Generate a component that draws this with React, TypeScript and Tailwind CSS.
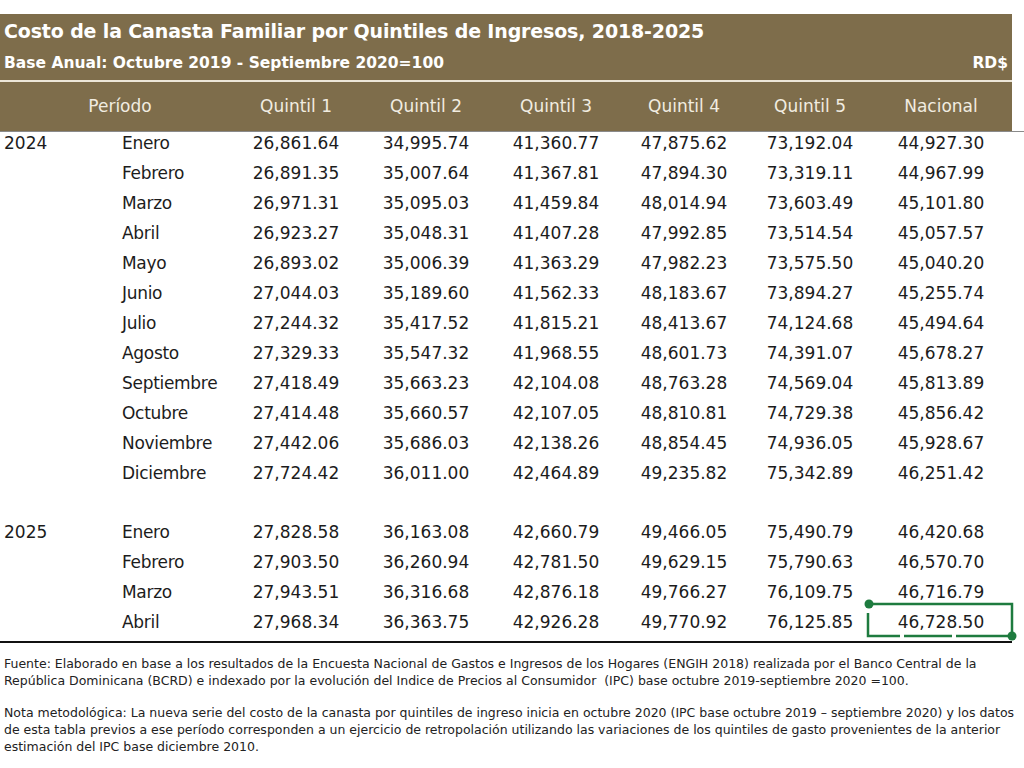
const rows2024 = [
  ["Enero", "26,861.64", "34,995.74", "41,360.77", "47,875.62", "73,192.04", "44,927.30"],
  ["Febrero", "26,891.35", "35,007.64", "41,367.81", "47,894.30", "73,319.11", "44,967.99"],
  ["Marzo", "26,971.31", "35,095.03", "41,459.84", "48,014.94", "73,603.49", "45,101.80"],
  ["Abril", "26,923.27", "35,048.31", "41,407.28", "47,992.85", "73,514.54", "45,057.57"],
  ["Mayo", "26,893.02", "35,006.39", "41,363.29", "47,982.23", "73,575.50", "45,040.20"],
  ["Junio", "27,044.03", "35,189.60", "41,562.33", "48,183.67", "73,894.27", "45,255.74"],
  ["Julio", "27,244.32", "35,417.52", "41,815.21", "48,413.67", "74,124.68", "45,494.64"],
  ["Agosto", "27,329.33", "35,547.32", "41,968.55", "48,601.73", "74,391.07", "45,678.27"],
  ["Septiembre", "27,418.49", "35,663.23", "42,104.08", "48,763.28", "74,569.04", "45,813.89"],
  ["Octubre", "27,414.48", "35,660.57", "42,107.05", "48,810.81", "74,729.38", "45,856.42"],
  ["Noviembre", "27,442.06", "35,686.03", "42,138.26", "48,854.45", "74,936.05", "45,928.67"],
  ["Diciembre", "27,724.42", "36,011.00", "42,464.89", "49,235.82", "75,342.89", "46,251.42"],
];

const rows2025 = [
  ["Enero", "27,828.58", "36,163.08", "42,660.79", "49,466.05", "75,490.79", "46,420.68"],
  ["Febrero", "27,903.50", "36,260.94", "42,781.50", "49,629.15", "75,790.63", "46,570.70"],
  ["Marzo", "27,943.51", "36,316.68", "42,876.18", "49,766.27", "76,109.75", "46,716.79"],
  ["Abril", "27,968.34", "36,363.75", "42,926.28", "49,770.92", "76,125.85", "46,728.50"],
];

// column widths: year, month, Q1..Q5, Nacional
const cols = "grid grid-cols-[118px_114px_128px_132px_128px_128px_124px_138px]";

function YearBlock({ year, rows }: { year: string; rows: string[][] }) {
  return (
    <div>
      {rows.map((r, i) => (
        <div key={r[0]} className={`${cols} h-[30px] leading-[23px] text-[17px] text-[#1c1c1c]`}>
          <div className="pl-1">{i === 0 ? year : ""}</div>
          <div className="pl-1 tracking-[-0.3px]">{r[0]}</div>
          {r.slice(1).map((v, j) => (
            <div key={j} className="text-center">
              {v}
            </div>
          ))}
        </div>
      ))}
    </div>
  );
}

export default function App() {
  return (
    <div className="relative w-[1024px] h-[768px] bg-white overflow-hidden" style={{ fontFamily: '"DejaVu Sans", Verdana, sans-serif' }}>
      {/* Header band */}
      <div className="mt-[14px] w-[1012px] bg-[#7e6d4b]">
        <div className="h-[36px] px-1 pt-[3px] text-[19px] tracking-[-0.15px] font-bold text-white leading-[28px]">
          Costo de la Canasta Familiar por Quintiles de Ingresos, 2018-2025
        </div>
        <div className="flex justify-between h-[30px] px-1 text-[15.5px] font-bold text-white leading-[26px]">
          <span>Base Anual: Octubre 2019 - Septiembre 2020=100</span>
          <span>RD$</span>
        </div>
        <div className="h-[2px] bg-[#ece6d8]" />
        <div className={`${cols} h-[49px] items-center text-[17px] text-[#f1ece0]`}>
          <div className="col-span-2 text-center pl-2">Período</div>
          <div className="text-center">Quintil 1</div>
          <div className="text-center">Quintil 2</div>
          <div className="text-center">Quintil 3</div>
          <div className="text-center">Quintil 4</div>
          <div className="text-center">Quintil 5</div>
          <div className="text-center">Nacional</div>
        </div>
      </div>
      <div className="h-px w-full bg-[#8a8a8a]" />

      {/* Data */}
      <div className="w-[1012px]">
        <YearBlock year="2024" rows={rows2024} />
        <div className="h-[29px]" />
        <YearBlock year="2025" rows={rows2025} />
      </div>
      <div className="h-[2px] w-[1012px] bg-[#111]" />

      {/* Notes */}
      <div className="px-1 pt-[12px] text-[12.5px] leading-[17px] text-[#222]">
        <p>
          Fuente: Elaborado en base a los resultados de la Encuesta Nacional de Gastos e Ingresos de los Hogares (ENGIH 2018) realizada por el Banco Central de la República Dominicana (BCRD) e indexado por la evolución del Indice de Precios al Consumidor&nbsp; (IPC) base octubre 2019-septiembre 2020 =100.
        </p>
        <p className="mt-[15px]">
          Nota metodológica: La nueva serie del costo de la canasta por quintiles de ingreso inicia en octubre 2020 (IPC base octubre 2019 – septiembre 2020) y los datos de esta tabla previos a ese período corresponden a un ejercicio de retropolación utilizando las variaciones de los quintiles de gasto provenientes de la anterior estimación del IPC base diciembre 2010.
        </p>
      </div>

      {/* Green highlight marker */}
      <svg className="absolute left-[860px] top-[596px]" width="164" height="50" viewBox="0 0 164 50">
        <g stroke="#1e7b3f" strokeWidth="2.5" fill="none">
          <path d="M9 8 H152 V36" />
          <path d="M8 17 V40 H40 M44 40 H92 M96 40 H152" />
        </g>
        <circle cx="9" cy="8" r="4.5" fill="#1e7b3f" />
        <circle cx="152" cy="40" r="4.5" fill="#1e7b3f" />
      </svg>
    </div>
  );
}
